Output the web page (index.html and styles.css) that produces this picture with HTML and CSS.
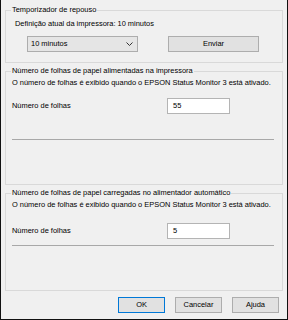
FILE: index.html
```html
<!DOCTYPE html>
<html lang="pt">
<head>
<meta charset="utf-8">
<link rel="stylesheet" href="styles.css">
</head>
<body>
<div class="dialog">
  <fieldset class="group g1">
    <legend>Temporizador de repouso</legend>
    <div class="g1-body">
      <div class="line current">Definição atual da impressora: 10 minutos</div>
      <div class="ctrl-row">
        <div class="combo"><span>10 minutos</span>
          <svg class="chev" width="7" height="4" viewBox="0 0 7 4"><path d="M0.5 0.5 L3.5 3.5 L6.5 0.5" fill="none" stroke="#333" stroke-width="1"/></svg>
        </div>
        <button class="btn send">Enviar</button>
      </div>
    </div>
  </fieldset>

  <fieldset class="group g2">
    <legend>Número de folhas de papel alimentadas na impressora</legend>
    <div class="g-body">
      <div class="line">O número de folhas é exibido quando o EPSON Status Monitor 3 está ativado.</div>
      <div class="field-row">
        <span class="label">Número de folhas</span>
        <div class="input">55</div>
      </div>
      <div class="sep"></div>
    </div>
  </fieldset>

  <fieldset class="group g3">
    <legend>Número de folhas de papel carregadas no alimentador automático</legend>
    <div class="g-body">
      <div class="line">O número de folhas é exibido quando o EPSON Status Monitor 3 está ativado.</div>
      <div class="field-row">
        <span class="label">Número de folhas</span>
        <div class="input">5</div>
      </div>
      <div class="sep"></div>
    </div>
  </fieldset>

  <div class="actions">
    <button class="btn act ok">OK</button>
    <button class="btn act">Cancelar</button>
    <button class="btn act">Ajuda</button>
  </div>
</div>
</body>
</html>
```

FILE: styles.css
```css
* { box-sizing: border-box; }
html, body { margin: 0; padding: 0; }
body {
  font-family: "Liberation Sans", Arial, sans-serif;
  font-size: 7.45px;
  line-height: 10px;
  color: #000;
  background: #f0f0f0;
}
.dialog {
  width: 288px;
  height: 320px;
  background: #f0f0f0;
  border: 1px solid #111;
  border-top: none;
  padding: 5px 4px 0 4px;
  display: flex;
  flex-direction: column;
  gap: 3px;
}
.group {
  margin: 0;
  padding: 0;
  border: 1px solid #d9d9d9;
  min-width: 0;
}
.group legend {
  margin-left: 5px;
  padding: 0 1px;
  line-height: 10px;
  white-space: nowrap;
}
.g1 { height: 58px; }
.g2 { height: 119px; }
.g3 { height: 103px; }
.g1-body {
  padding: 4px 0 0 9px;
  display: flex;
  flex-direction: column;
  gap: 7px;
}
.line { white-space: nowrap; height: 10px; }
.ctrl-row {
  display: flex;
  padding-left: 12px;
  gap: 30px;
}
.combo {
  width: 111px;
  height: 16px;
  border: 1px solid #adadad;
  background: #e5e5e5;
  display: flex;
  align-items: center;
  justify-content: space-between;
  padding: 0 4px 0 3px;
}
.chev { display: block; }
.btn {
  font: inherit;
  color: #000;
  height: 16px;
  border: 1px solid #adadad;
  background: #e1e1e1;
  padding: 0;
  margin: 0;
}
.send { width: 91px; }
.g-body {
  padding: 2px 8px 0 6px;
  display: flex;
  flex-direction: column;
}
.field-row {
  display: flex;
  margin-top: 10px;
  height: 16px;
}
.label { width: 155px; margin-top: 3px; }
.input {
  width: 63px;
  height: 16px;
  border: 1px solid #b4b4b4;
  background: #fff;
  padding: 2px 0 0 5px;
}
.sep {
  margin-top: 25px;
  height: 1px;
  background: #a8a8a8;
  width: 262px;
}
.g3 .field-row { margin-top: 13px; }
.g3 .sep { margin-top: 6px; }
.actions {
  display: flex;
  justify-content: flex-end;
  gap: 10px;
  padding: 3px 4px 0 0;
}
.act { width: 47px; }
.ok { border-color: #0078d7; }
```
